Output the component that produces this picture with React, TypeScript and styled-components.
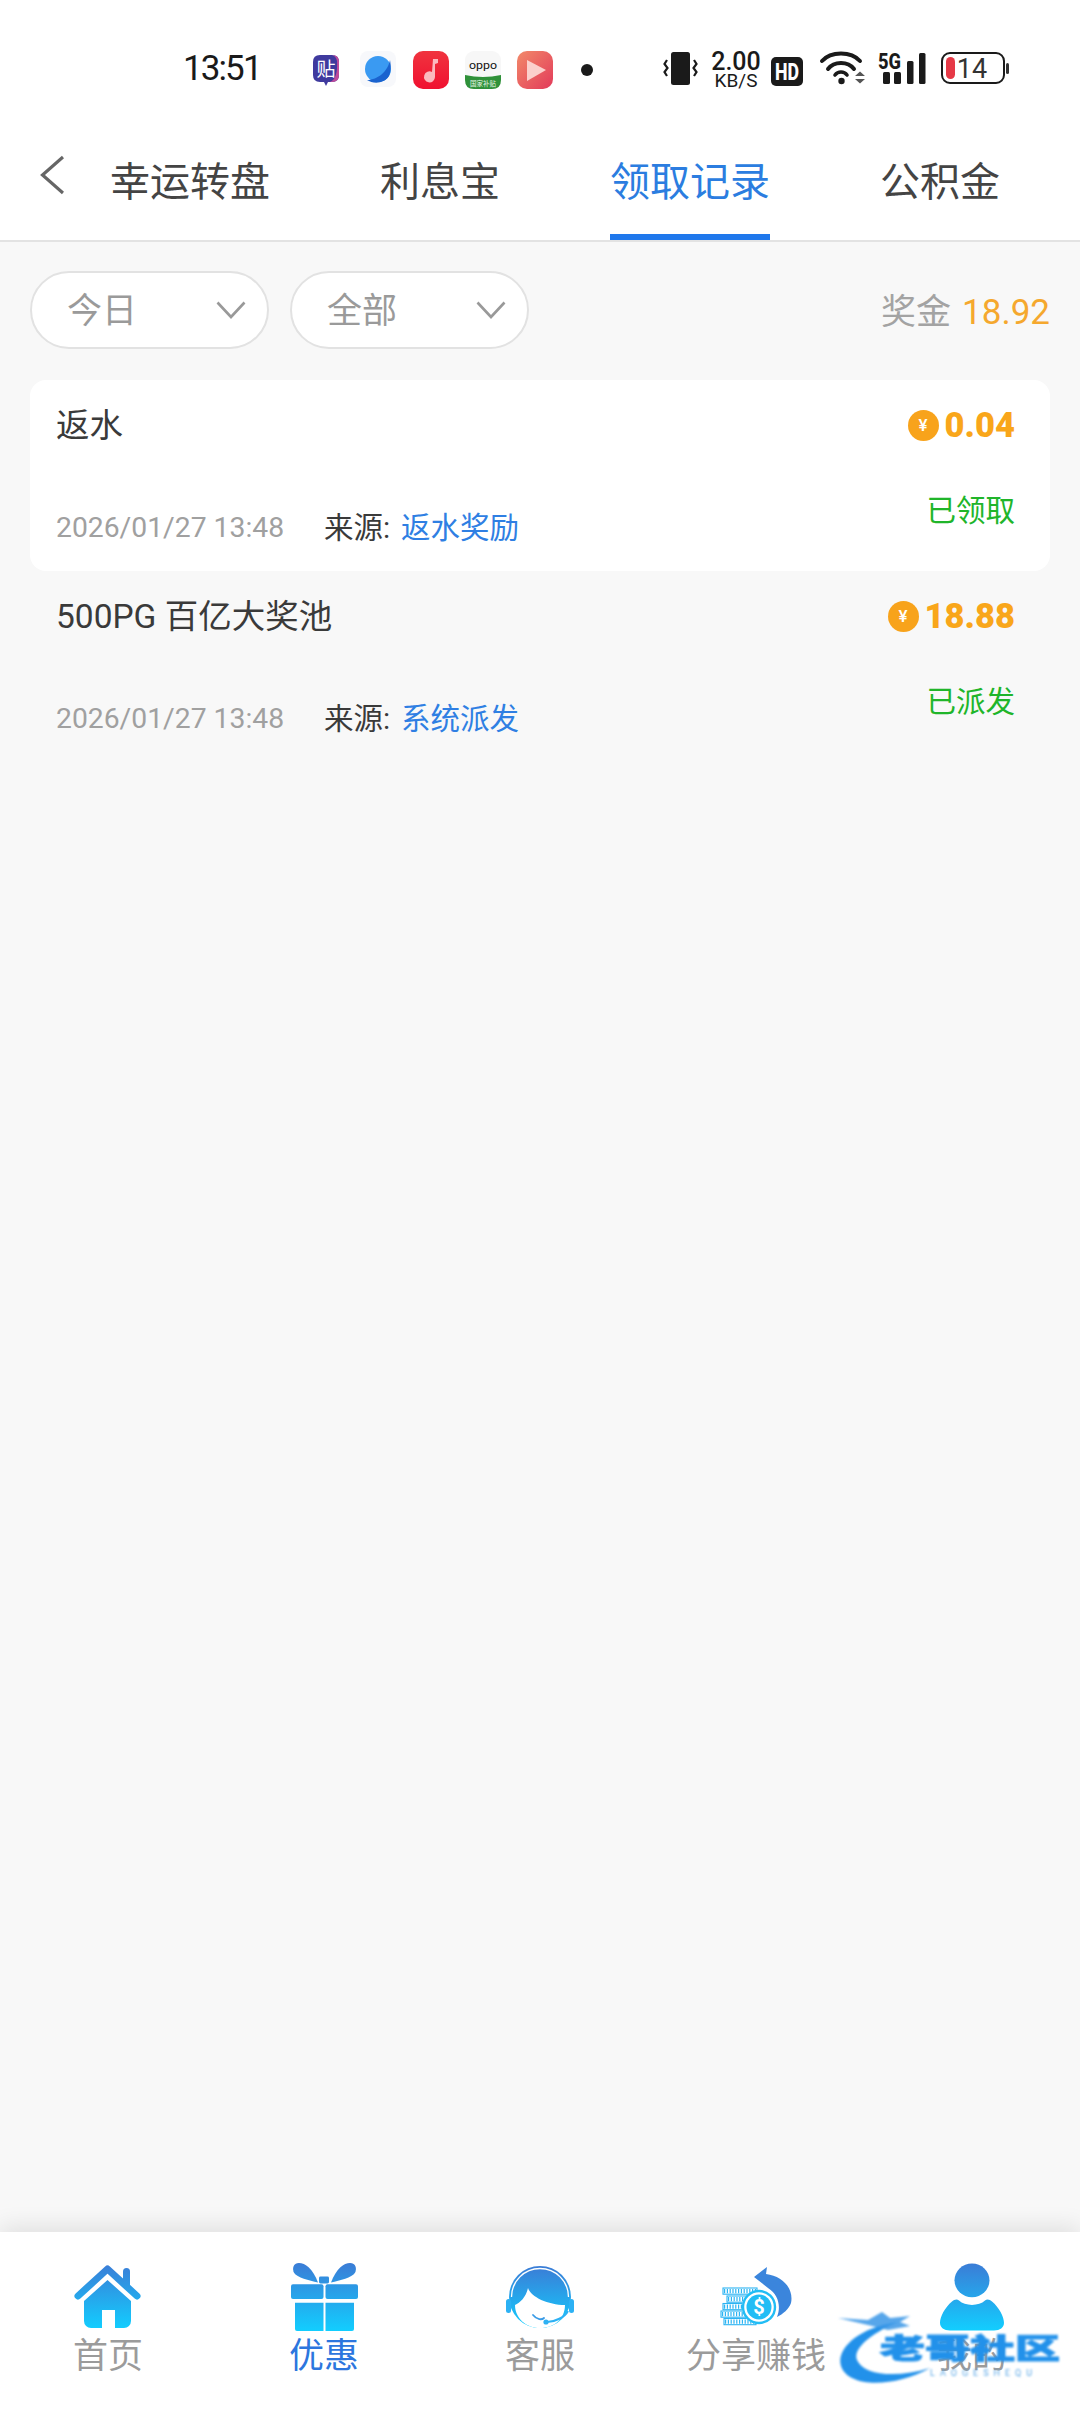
import React from "react";
import styled, { createGlobalStyle } from "styled-components";

const GlobalStyle = createGlobalStyle`
  html, body {
    margin: 0;
    padding: 0;
    background: #f8f8f8;
    font-family: Roboto, "Noto Sans CJK SC", sans-serif;
  }
`;

const Page = styled.div`
  width: 1080px;
  height: 2412px;
  display: flex;
  flex-direction: column;
  overflow: hidden;
`;

/* status bar */
const StatusBar = styled.div`
  height: 130px;
  background: #fff;
  display: flex;
  align-items: flex-start;
  padding: 51px 0 0 183px;
  box-sizing: border-box;
`;

const Clock = styled.div`
  width: 77px;
  height: 36px;
  line-height: 36px;
  font-size: 35px;
  letter-spacing: -1.9px;
  color: #1a1a1a;
  white-space: nowrap;
`;

const StatusIcon = styled.svg<{ $ml: number }>`
  display: block;
  flex: none;
  margin-left: ${(props) => props.$ml}px;
`;

const Speed = styled.div`
  width: 50px;
  margin-left: 12px;
  color: #1a1a1a;
  display: flex;
  flex-direction: column;
  align-items: center;
  font-weight: 500;
  white-space: nowrap;
`;

const SpeedValue = styled.div`
  font-size: 25px;
  line-height: 21px;
`;

const SpeedUnit = styled.div`
  font-size: 19px;
  line-height: 17px;
  font-weight: 400;
`;

/* tabs */
const Nav = styled.div`
  height: 112px;
  background: #fff;
  border-bottom: 2px solid #e3e3e3;
  box-sizing: border-box;
  display: flex;
`;

const BackSlot = styled.div`
  width: 65px;
  padding: 25px 0 0 40px;
  box-sizing: border-box;
`;

const NavTab = styled.div`
  width: 250px;
  display: flex;
  justify-content: center;
`;

const NavLabel = styled.div<{ $active?: boolean }>`
  height: 110px;
  line-height: 106px;
  box-sizing: border-box;
  font-size: 40px;
  color: ${(props) => (props.$active ? "#2b7de0" : "#444")};
  border-bottom: 6px solid ${(props) => (props.$active ? "#1f78ec" : "transparent")};
`;

/* filters */
const FilterBar = styled.div`
  display: flex;
  align-items: center;
  padding: 29px 30px 31px;
`;

const Pill = styled.div`
  width: 239px;
  height: 78px;
  margin-right: 21px;
  padding: 0 21px 0 35px;
  box-sizing: border-box;
  background: #fff;
  border: 2px solid #e2e2e2;
  border-radius: 39px;
  display: flex;
  align-items: center;
  justify-content: space-between;
  font-size: 35px;
  color: #9a9a9a;
`;

const PillText = styled.span`
  margin-bottom: 5px;
`;

const Summary = styled.div`
  margin-left: auto;
  margin-bottom: 3px;
  font-size: 35px;
  color: #a3a3a3;
  white-space: nowrap;
`;

const SummaryValue = styled.span`
  margin-left: 11px;
  color: #f5a82e;
`;

/* records */
const Record = styled.div<{ $highlight?: boolean }>`
  height: 191px;
  margin: 0 30px;
  padding: 25px 35px 0 26px;
  box-sizing: border-box;
  border-radius: 16px;
  background: ${(props) => (props.$highlight ? "#fff" : "transparent")};
`;

const RecordTop = styled.div`
  height: 40px;
  display: flex;
  align-items: center;
  justify-content: space-between;
`;

const RecordTitle = styled.div`
  margin-bottom: 6px;
  font-size: 33.5px;
  color: #3a3a3a;
`;

const Amount = styled.div`
  display: flex;
  align-items: center;
  font-size: 34.5px;
  font-weight: 900;
  color: #f9a61a;
`;

const Coin = styled.span`
  width: 31px;
  height: 31px;
  margin-right: 6px;
  border-radius: 50%;
  background: #f8a31b;
  color: #fff;
  font-size: 17px;
  font-weight: 500;
  line-height: 31px;
  text-align: center;
`;

const RecordBottom = styled.div`
  margin-top: 48px;
  display: flex;
  justify-content: space-between;
  align-items: flex-start;
`;

const Meta = styled.div`
  display: flex;
  align-items: center;
  height: 36px;
  margin-top: 16px;
  white-space: nowrap;
`;

const DateText = styled.span`
  width: 268px;
  font-size: 28.3px;
  color: #a0a0a0;
`;

const SourceLabel = styled.span`
  width: 77px;
  margin-bottom: 5px;
  font-size: 29.5px;
  color: #3a3a3a;
`;

const SourceValue = styled.span`
  margin-bottom: 5px;
  font-size: 29.5px;
  color: #2f7fe3;
`;

const Status = styled.div`
  height: 36px;
  line-height: 36px;
  font-size: 29.5px;
  color: #20b52a;
`;

const Spacer = styled.div`
  flex: 1;
`;

/* bottom tabs */
const TabBar = styled.div`
  position: relative;
  height: 180px;
  padding-top: 31px;
  box-sizing: border-box;
  background: #fff;
  box-shadow: 0 -5px 22px rgba(0, 0, 0, 0.1);
  display: flex;
`;

const TabItem = styled.div`
  width: 216px;
  display: flex;
  flex-direction: column;
  align-items: center;
`;

const TabIcon = styled.div`
  height: 69px;
  display: flex;
  align-items: flex-start;
  justify-content: center;
`;

const TabLabel = styled.div<{ $active?: boolean }>`
  height: 50px;
  line-height: 50px;
  font-size: 35px;
  white-space: nowrap;
  color: ${(props) => (props.$active ? "#2c76de" : "#9b9b9b")};
`;

/* site mark over the last tab */
const Mark = styled.div`
  position: absolute;
  left: 838px;
  top: 78px;
  width: 232px;
  height: 90px;
  filter: blur(0.9px);
`;

const MarkName = styled.div`
  position: absolute;
  left: 42px;
  top: 10px;
  font-size: 45px;
  line-height: 60px;
  font-weight: 900;
  color: #2291ea;
  -webkit-text-stroke: 1.6px #2291ea;
  white-space: nowrap;
  transform: scaleY(0.62);
`;

const MarkLatin = styled.div`
  position: absolute;
  left: 92px;
  top: 58px;
  font-size: 9px;
  line-height: 10px;
  letter-spacing: 5px;
  color: #5aa7e6;
  white-space: nowrap;
`;

const Chevron = () => (
  <svg width="30" height="18" viewBox="0 0 30 18">
    <path d="M1.5 1.5 L15 16 L28.5 1.5" fill="none" stroke="#999" strokeWidth="2.6" />
  </svg>
);

const Grad = ({ id }: { id: string }) => (
  <defs>
    <linearGradient id={id} x1="0" y1="0" x2="0" y2="1">
      <stop offset="0" stopColor="#3b7cd6" />
      <stop offset="1" stopColor="#12ceff" />
    </linearGradient>
  </defs>
);

const HomeIcon = () => (
  <svg width="68" height="68" viewBox="0 0 68 68">
    <defs>
      <linearGradient id="home" gradientUnits="userSpaceOnUse" x1="0" y1="0" x2="0" y2="66">
        <stop offset="0" stopColor="#3b7cd6" />
        <stop offset="1" stopColor="#12ceff" />
      </linearGradient>
    </defs>
    <path d="M4 33 L33.5 6 L63 33" fill="none" stroke="url(#home)" strokeWidth="7" strokeLinecap="round" strokeLinejoin="round" />
    <rect x="49" y="5" width="7" height="20" rx="3.5" fill="url(#home)" />
    <path d="M10 38 L33.5 17 L57 38 V58 a7 7 0 0 1 -7 7 H41 V47 H28 V65 H17 a7 7 0 0 1 -7 -7 Z" fill="url(#home)" />
  </svg>
);

const GiftIcon = () => (
  <svg width="67" height="68" viewBox="0 0 67 70" preserveAspectRatio="none">
    <defs>
      <linearGradient id="gift" gradientUnits="userSpaceOnUse" x1="0" y1="0" x2="0" y2="70">
        <stop offset="0" stopColor="#3b7cd6" />
        <stop offset="1" stopColor="#12ceff" />
      </linearGradient>
    </defs>
    <path d="M27 20 C22 6 14 0 8 0 C2 0 1 6 3 10 C6 15 18 18 27 20Z" fill="url(#gift)" />
    <path d="M40 20 C45 6 53 0 59 0 C65 0 66 6 64 10 C61 15 49 18 40 20Z" fill="url(#gift)" />
    <rect x="28" y="14" width="10" height="7" rx="1.5" fill="url(#gift)" />
    <rect x="0" y="22" width="32.5" height="15" rx="2" fill="url(#gift)" />
    <rect x="34.5" y="22" width="32.5" height="15" rx="2" fill="url(#gift)" />
    <path d="M4 41 H32.5 V70 H6 a2 2 0 0 1 -2 -2 Z" fill="url(#gift)" />
    <path d="M34.5 41 H63 V68 a2 2 0 0 1 -2 2 H34.5 Z" fill="url(#gift)" />
  </svg>
);

const AgentIcon = () => (
  <svg width="70" height="68" viewBox="0 0 70 68">
    <Grad id="agent" />
    <circle cx="35" cy="34" r="31" fill="url(#agent)" />
    <path d="M6.5 34 A28.5 28.5 0 0 1 63.5 34" fill="none" stroke="#fff" strokeWidth="1.3" />
    <rect x="1" y="36" width="5" height="14" rx="2.5" fill="#2cb1f4" />
    <rect x="64" y="36" width="5" height="14" rx="2.5" fill="#2cb1f4" />
    <path d="M10 42 C15 40 21 34 23 25 C26 34 43 42 60 42 C60 56 49 65 35 65 C21 65 10 55 10 42Z" fill="#fff" />
    <path d="M28 52 C32 57 37 57 39 55" fill="none" stroke="#3a9be6" strokeWidth="1.8" strokeLinecap="round" />
    <path d="M63 48 C60 54 50 59 42 59" fill="none" stroke="#2cb1f4" strokeWidth="2" />
    <circle cx="41" cy="59" r="2.6" fill="#2cb1f4" />
  </svg>
);

const stacks = [
  { x: 4, y: 23, w: 34 },
  { x: 8, y: 31, w: 26 },
  { x: 4, y: 38.5, w: 26 },
  { x: 2, y: 46, w: 26 },
  { x: 5, y: 53.5, w: 32 },
];

const ShareIcon = () => (
  <svg width="74" height="68" viewBox="0 -2 74 68">
    <path d="M35 12 L48 2 L47 9 C64 11 75 24 72 38 C70 44 64 49 58 52 C62 42 60 30 49 23 Z" fill="#3b85dc" />
    {stacks.map((s) => (
      <g key={s.y}>
        <rect x={s.x} y={s.y} width={s.w} height="6.2" fill="#fff" stroke="#2cb4f3" strokeWidth="1.1" />
        <line x1={s.x + 1} y1={s.y + 3.1} x2={s.x + s.w - 1} y2={s.y + 3.1} stroke="#2cb4f3" strokeWidth="4.4" strokeDasharray="1.2 1.6" />
      </g>
    ))}
    <circle cx="40" cy="42" r="17" fill="#fff" />
    <circle cx="40" cy="42" r="16" fill="none" stroke="#22bdf5" strokeWidth="2.4" />
    <circle cx="40" cy="42" r="12.5" fill="#22bdf5" />
    <text x="40" y="49" textAnchor="middle" fontSize="20" fontWeight="700" fill="#fff">$</text>
  </svg>
);

const UserIcon = () => (
  <svg width="66" height="68" viewBox="0 0 66 70.5" preserveAspectRatio="none">
    <defs>
      <linearGradient id="user" gradientUnits="userSpaceOnUse" x1="0" y1="0" x2="0" y2="70">
        <stop offset="0" stopColor="#3b7cd6" />
        <stop offset="1" stopColor="#12ceff" />
      </linearGradient>
    </defs>
    <circle cx="33" cy="18" r="17.5" fill="url(#user)" />
    <path d="M20 39 C26 45 40 45 46 39 C48 37 51 38 53 40 C60 46 65 56 65 62 C65 67 61 70 55 70 H11 C5 70 1 67 1 62 C1 56 6 46 13 40 C15 38 18 37 20 39 Z" fill="url(#user)" />
  </svg>
);

const navItems = ["幸运转盘", "利息宝", "领取记录", "公积金"];

const records = [
  { title: "返水", amount: "0.04", state: "已领取", date: "2026/01/27 13:48", source: "返水奖励", highlight: true },
  { title: "500PG 百亿大奖池", amount: "18.88", state: "已派发", date: "2026/01/27 13:48", source: "系统派发", highlight: false },
];

const tabs = [
  { label: "首页", icon: <HomeIcon /> },
  { label: "优惠", icon: <GiftIcon />, active: true },
  { label: "客服", icon: <AgentIcon /> },
  { label: "分享赚钱", icon: <ShareIcon /> },
  { label: "我的", icon: <UserIcon /> },
];

const App: React.FC = () => (
  <Page>
    <GlobalStyle />
    <StatusBar>
      <Clock>13:51</Clock>
      <StatusIcon $ml={52} width="28" height="36" viewBox="0 0 28 36">
        <path d="M8 4 H20 Q27 4 27 11 V24 Q27 31 20 31 H16 L14 35 L12 31 H8 Q1 31 1 24 V11 Q1 4 8 4 Z" fill="#3f3a9e" />
        <path d="M20 4 Q27 4 27 11 V24 Q27 31 20 31 H18 Q26 28 25 10 Q24 5 20 4 Z" fill="#c04a9a" />
        <text x="14" y="25" textAnchor="middle" fontSize="19" fill="#fff" fontFamily="Noto Sans CJK SC">贴</text>
      </StatusIcon>
      <StatusIcon $ml={20} width="36" height="36" viewBox="0 0 36 36">
        <rect width="36" height="36" rx="8" fill="#f7f8fb" />
        <circle cx="18" cy="18" r="13" fill="#3a9af2" />
        <path d="M30 9 C28 20 18 29 7 29 C13 33 24 33 29 25 C31 21 31 14 30 9 Z" fill="#1a63cf" />
      </StatusIcon>
      <StatusIcon $ml={17} width="36" height="38" viewBox="0 0 36 38">
        <defs>
          <linearGradient id="music" x1="0" y1="0" x2="0" y2="1">
            <stop offset="0" stopColor="#f0343f" />
            <stop offset="1" stopColor="#f01030" />
          </linearGradient>
        </defs>
        <rect width="36" height="38" rx="10" fill="url(#music)" />
        <path d="M20 8 H25 V12 L22 13 V26 A5.5 5.5 0 1 1 19 21 Z" fill="#fbb9bf" />
      </StatusIcon>
      <StatusIcon $ml={16} width="36" height="38" viewBox="0 0 36 38">
        <rect width="36" height="38" rx="9" fill="#f7f7f7" />
        <path d="M0 24 Q18 28 36 24 V29 Q36 38 27 38 H9 Q0 38 0 29 Z" fill="#2f9139" />
        <text x="18" y="18" textAnchor="middle" fontSize="11" fill="#111" fontFamily="Roboto" textLength="28" lengthAdjust="spacingAndGlyphs">oppo</text>
        <text x="18" y="35" textAnchor="middle" fontSize="6.5" fill="#e8f5e8" fontFamily="Noto Sans CJK SC">国家补贴</text>
      </StatusIcon>
      <StatusIcon $ml={16} width="36" height="38" viewBox="0 0 36 38">
        <defs>
          <linearGradient id="play" x1="0" y1="0" x2="1" y2="1">
            <stop offset="0" stopColor="#f28a6a" />
            <stop offset="1" stopColor="#e23a5a" />
          </linearGradient>
        </defs>
        <rect width="36" height="38" rx="10" fill="url(#play)" />
        <path d="M10 9 L29 19 L10 30 Z" fill="#fbd0cc" />
      </StatusIcon>
      <StatusIcon $ml={28} width="12" height="38" viewBox="0 0 12 38">
        <circle cx="6" cy="19" r="6" fill="#1a1a1a" />
      </StatusIcon>
      <StatusIcon $ml={69} width="37" height="34" viewBox="0 0 37 34">
        <rect x="9" y="1" width="19" height="33" rx="2.5" fill="#1a1a1a" />
        <path d="M5 9 L2.5 13 L5.5 17 L2.5 21 L5 25" fill="none" stroke="#1a1a1a" strokeWidth="2.2" />
        <path d="M32 9 L34.5 13 L31.5 17 L34.5 21 L32 25" fill="none" stroke="#1a1a1a" strokeWidth="2.2" />
      </StatusIcon>
      <Speed>
        <SpeedValue>2.00</SpeedValue>
        <SpeedUnit>KB/S</SpeedUnit>
      </Speed>
      <StatusIcon $ml={10} width="32" height="36" viewBox="0 0 32 36">
        <rect y="6" width="32" height="29" rx="5" fill="#1a1a1a" />
        <text x="16" y="29" textAnchor="middle" fontSize="23" fontWeight="800" fill="#fff" textLength="24" lengthAdjust="spacingAndGlyphs" fontFamily="Roboto">HD</text>
      </StatusIcon>
      <StatusIcon $ml={16} width="48" height="34" viewBox="0 0 48 34">
        <path d="M3 10 C12 0 32 0 41 10" fill="none" stroke="#1a1a1a" strokeWidth="4" strokeLinecap="round" />
        <path d="M9 18 C15 10 29 10 35 18" fill="none" stroke="#1a1a1a" strokeWidth="4" strokeLinecap="round" />
        <path d="M16 24 C19 20 25 20 28 24" fill="none" stroke="#1a1a1a" strokeWidth="3.6" strokeLinecap="round" />
        <circle cx="22.5" cy="30" r="3.2" fill="#1a1a1a" />
        <path d="M36 25 L41 20.5 L46 25 Z M36 28 L41 32.5 L46 28 Z" fill="#555" />
      </StatusIcon>
      <StatusIcon $ml={10} width="50" height="34" viewBox="0 0 50 34">
        <text x="1" y="18" fontSize="22" fontWeight="800" fill="#1a1a1a" textLength="23" lengthAdjust="spacingAndGlyphs" fontFamily="Roboto">5G</text>
        <rect x="6" y="21" width="7" height="12" rx="1.5" fill="#1a1a1a" />
        <rect x="17" y="21" width="7" height="12" rx="1.5" fill="#1a1a1a" />
        <rect x="30" y="10" width="6.5" height="23" rx="1.5" fill="#1a1a1a" />
        <rect x="42" y="2" width="6.5" height="31" rx="1.5" fill="#1a1a1a" />
      </StatusIcon>
      <StatusIcon $ml={14} width="70" height="34" viewBox="0 0 70 34">
        <rect x="1" y="2" width="62" height="30" rx="8" fill="#fff" stroke="#1a1a1a" strokeWidth="2" />
        <rect x="5" y="6" width="9" height="22" rx="4.5" fill="#e63946" />
        <rect x="65" y="12" width="3" height="11" rx="1.5" fill="#333" />
        <text x="31" y="27" textAnchor="middle" fontSize="27" fill="#333" fontFamily="Roboto">14</text>
      </StatusIcon>
    </StatusBar>

    <Nav>
      <BackSlot>
        <svg width="24" height="40" viewBox="0 0 24 40">
          <path d="M23 2 L2.5 20 L23 38" fill="none" stroke="#666" strokeWidth="3.2" />
        </svg>
      </BackSlot>
      {navItems.map((item) => (
        <NavTab key={item}>
          <NavLabel $active={item === "领取记录"}>{item}</NavLabel>
        </NavTab>
      ))}
    </Nav>

    <FilterBar>
      <Pill>
        <PillText>今日</PillText>
        <Chevron />
      </Pill>
      <Pill>
        <PillText>全部</PillText>
        <Chevron />
      </Pill>
      <Summary>
        奖金<SummaryValue>18.92</SummaryValue>
      </Summary>
    </FilterBar>

    {records.map((r) => (
      <Record key={r.title} $highlight={r.highlight}>
        <RecordTop>
          <RecordTitle>{r.title}</RecordTitle>
          <Amount>
            <Coin>¥</Coin>
            {r.amount}
          </Amount>
        </RecordTop>
        <RecordBottom>
          <Meta>
            <DateText>{r.date}</DateText>
            <SourceLabel>来源:</SourceLabel>
            <SourceValue>{r.source}</SourceValue>
          </Meta>
          <Status>{r.state}</Status>
        </RecordBottom>
      </Record>
    ))}

    <Spacer />

    <TabBar>
      {tabs.map((t) => (
        <TabItem key={t.label}>
          <TabIcon>{t.icon}</TabIcon>
          <TabLabel $active={t.active}>{t.label}</TabLabel>
        </TabItem>
      ))}
      <Mark>
        <svg width="232" height="90" viewBox="0 0 232 90">
          <path d="M60 12 C18 18 -2 40 3 56 C10 78 56 78 92 58 C60 68 26 66 19 50 C14 38 36 22 60 12 Z" fill="#2291ea" />
          <path d="M0 8 L30 10 L44 2 L52 8 L72 6 L62 12 L72 16 L50 20 L34 16 Z" fill="#3a96e6" opacity="0.85" />
        </svg>
        <MarkName>老哥社区</MarkName>
        <MarkLatin>LAOGESHEQU</MarkLatin>
      </Mark>
    </TabBar>
  </Page>
);

export default App;
